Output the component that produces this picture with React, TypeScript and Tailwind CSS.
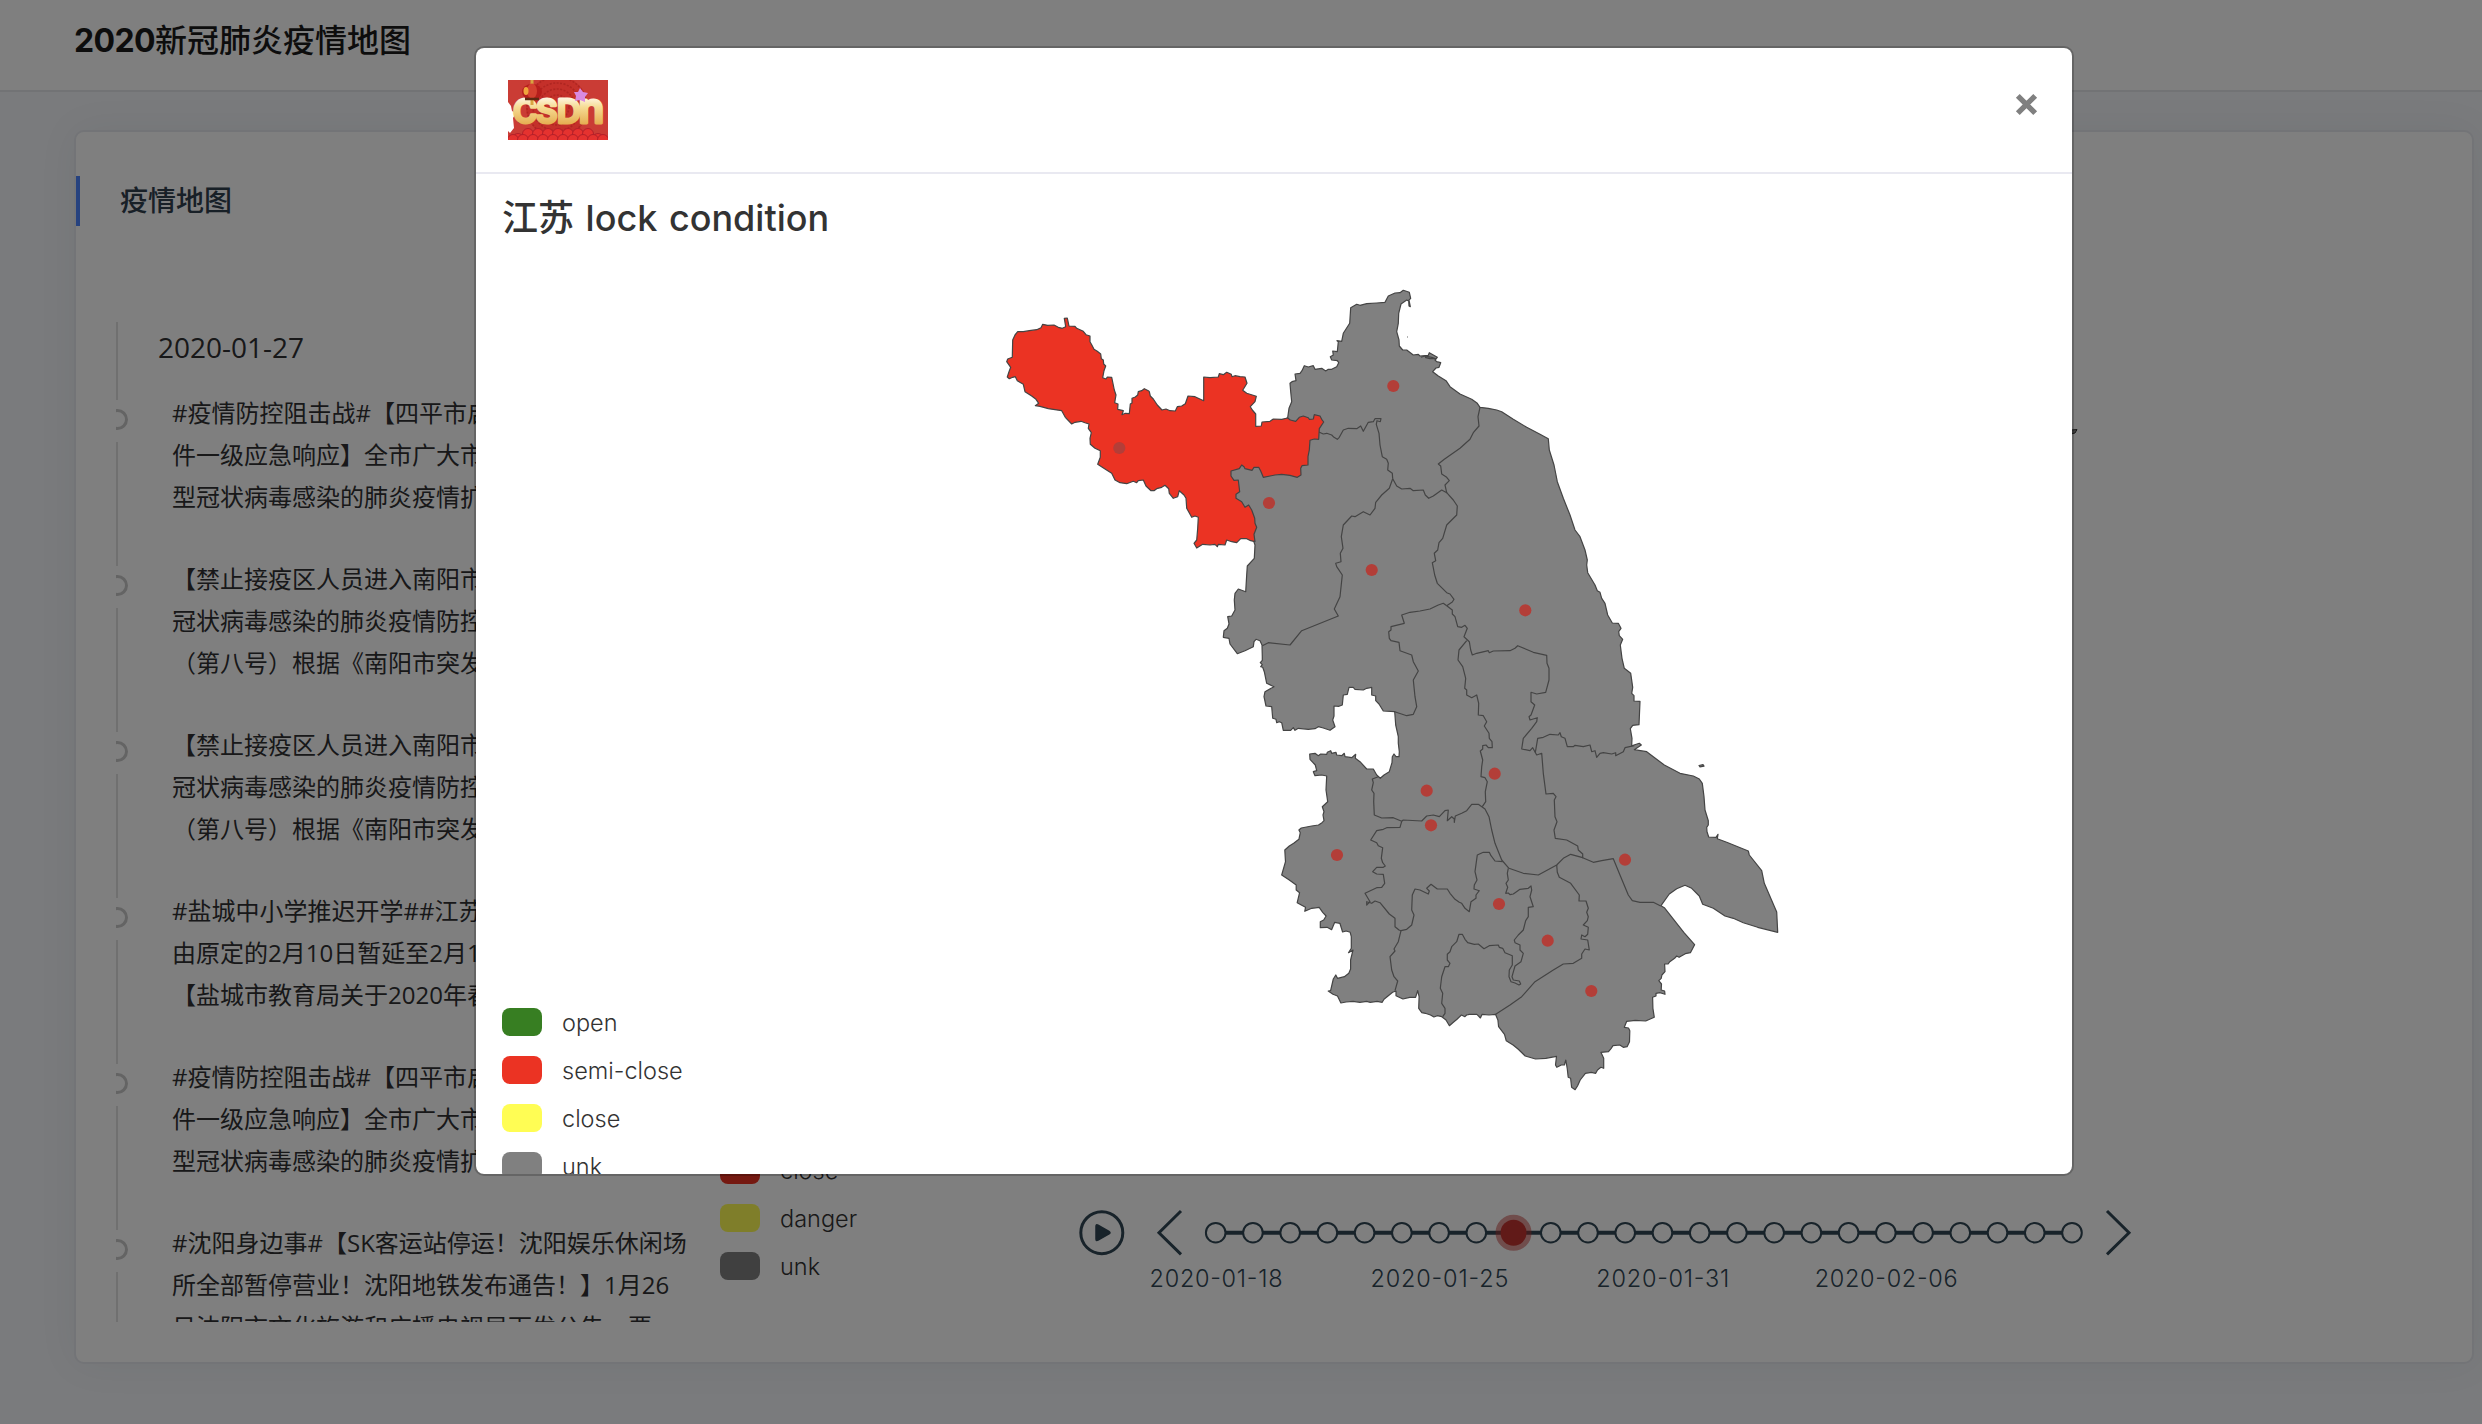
import React from "react";

type Origin = { x: number; y: number; sx: number; sy: number };

const NORTH_WEST: Origin = { x: 980, y: 280, sx: 3, sy: 3 };
const NORTH: Origin = { x: 1200, y: 270, sx: 3, sy: 3 };
const MIDDLE: Origin = { x: 1200, y: 600, sx: 3, sy: 3 };
const EAST: Origin = { x: 1480, y: 580, sx: 3, sy: 3 };
const SOUTH: Origin = { x: 1260, y: 800, sx: 2.904, sy: 3 };

/** Converts sheet-local points to map coordinates. */
function sheet(o: Origin, points: string): string {
  return points
    .trim()
    .split(/\s+/)
    .map((p) => {
      const [x, y] = p.split(",").map(Number);
      return `${(o.x + x / o.sx).toFixed(1)},${(o.y + y / o.sy).toFixed(1)}`;
    })
    .join(" ");
}

const xuzhou = sheet(
  NORTH_WEST,
  `113,155 130,155 148,152 170,149 183,143 188,133 203,136 222,135 235,142 247,145 257,140 253,115 262,114 267,138 285,139 290,145 310,154 318,164 330,168 330,185 335,194 342,208 352,214 362,222 364,236 370,240 371,252 377,258 372,272 368,293 378,297 382,291 395,292 400,315 403,330 408,345 404,368 414,372 413,388 430,392 426,404 436,400 448,401 451,372 456,369 456,355 466,351 473,345 475,335 485,332 493,326 505,332 508,335 511,348 520,357 532,375 546,390 558,387 570,392 586,393 592,380 605,378 616,371 624,348 645,350 658,356 671,362 671,291 690,293 715,291 718,281 730,284 740,277 754,283 756,290 765,287 780,290 795,291 801,310 788,331 800,340 829,349 825,365 811,380 817,390 827,402 827,439 844,438 846,426 870,424 880,417 905,418 923,414 931,420 947,424 958,412 970,408 985,413 988,418 1000,417 1003,404 1020,408 1025,418 1031,426 1018,446 1016,478 1003,477 990,481 988,510 984,530 984,555 966,557 962,565 963,585 952,592 930,586 905,583 885,585 870,588 850,592 842,573 836,562 822,562 816,571 795,566 792,560 785,555 778,566 753,573 753,588 762,601 775,600 779,635 768,643 768,655 785,665 795,682 806,675 815,690 824,715 825,730 830,742 822,763 825,785 812,782 800,776 782,776 770,788 755,785 740,780 735,795 715,793 712,800 705,793 690,795 668,793 650,804 642,790 650,780 653,745 655,712 645,708 635,712 620,685 618,655 612,645 598,632 593,650 580,655 568,640 566,626 555,616 545,622 530,626 522,632 513,632 498,618 490,600 475,602 470,608 460,604 440,611 420,608 405,600 395,580 375,567 353,553 361,532 361,512 345,505 331,493 330,475 334,458 325,445 327,432 315,428 303,424 285,427 275,432 256,412 245,392 225,389 205,386 180,379 166,377 176,370 168,358 155,348 135,335 130,313 112,302 106,290 98,292 88,296 82,291 87,275 92,262 80,245 83,237 97,232 98,180 105,165`,
);

const province = [
  sheet(NORTH, `263,443 267,415 275,395 272,365 270,340 276,335 288,332 285,312 300,310 306,302 313,287 325,291 340,287 345,298 365,295 377,303 385,298 395,298 410,290 416,278 412,272 395,270 391,260 400,255 398,243 412,245 415,215 411,212 425,214 430,190 449,160 452,113 470,103 480,106 500,101 530,99 555,97 565,78 585,69 600,68 610,61 628,67 632,85 627,90 631,110 627,108 626,93 620,90 603,102 596,130 595,160 590,185 597,210 598,228 608,240 620,240 640,255 655,253 660,258 685,256 688,248 712,262 705,270 710,275 722,278 717,292 708,294 698,305 715,318 738,332 750,350 780,372 815,388 832,400 840,412 865,415 890,420 905,425 940,448 980,472 1020,493 1045,506 1048,540 1062,585 1068,615 1072,635 1090,685 1110,735 1125,780 1140,800 1155,840 1162,870 1160,885 1163,908 1185,945 1192,962 1200,967 1205,985 1215,1000`),
  sheet(MIDDLE, `1215,10 1223,45 1237,69 1255,70 1263,85 1256,95 1258,107 1268,118 1261,135 1266,175 1273,205 1292,220 1298,262 1295,280 1302,287 1302,303 1320,304 1317,374 1298,376 1291,386 1296,415 1295,437 1318,430 1324,435 1303,449 1340,455`),
  sheet(EAST, `500,515 520,530 553,555 600,580 640,588 658,597 667,610 672,650 675,690 685,722 685,735 680,742 681,755 686,771 708,772 714,763 712,776 740,787 805,813 808,825 845,872 853,910 890,996 893,1057 833,1042 790,1028 760,1015 735,1008 700,985 668,973 658,948 635,925 615,916 590,926 568,942 543,977 553,983 612,1058`),
  sheet(SOUTH, `1262,434 1250,458 1235,461 1217,472 1210,468 1204,475 1190,485 1185,492 1175,492 1176,515 1167,525 1165,535 1158,542 1166,552 1165,570 1175,573 1176,583 1162,578 1150,580 1150,588 1140,592 1141,625 1145,652 1135,656 1120,663 1090,661 1065,664 1058,682 1070,684 1074,692 1073,725 1066,740 1055,742 1045,735 1025,737 1020,745 1012,755 990,757 998,775 998,805 990,802 980,810 975,820 962,817 945,820 930,840 922,858 915,869 905,862 902,835 895,832 892,805 888,780 884,795 875,795 862,802 858,795 861,769 830,775 800,777 770,768 750,748 735,735 715,722 710,703 693,680 691,660 684,643 665,645 645,643 640,654 630,643 608,643 600,645 595,650 585,645 572,658 560,668 550,677 540,660 528,650 515,647 505,651 495,645 480,640 470,638 461,625 462,590 458,572 452,592 435,592 415,597 395,587 395,573 385,577 360,598 355,607 340,604 320,607 310,604 290,607 270,604 250,606 235,609 225,588 212,583 198,573 205,572 213,537 220,525 225,535 245,530 258,520 263,507 263,480 270,450 257,458 265,445 265,410 262,397 250,393 240,396 232,370 217,367 208,389 195,382 175,383 175,365 185,360 192,348 182,337 172,322 150,325 130,334 132,322 120,315 108,308 115,278 105,270 105,255 85,240 63,225 74,185 72,150 85,138 98,130 113,118 117,98 113,90 120,84 150,78 170,75 180,68 186,62 183,45`),
  sheet(MIDDLE, `372,635 367,620 383,605 378,570 380,528 365,525 345,527 340,515 350,512 346,495 330,478 329,462 345,460 355,467 362,462 380,463 382,457 392,452 395,460 408,457 410,465 425,467 433,460 435,470 455,473 467,463 466,475 480,485 500,507 520,507 530,525 541,535 552,525 568,515 576,488 577,470 582,462 588,470 597,470 598,455 595,430 595,410 587,375 584,335 550,333 537,312 527,302 527,288 515,285 515,262 500,265 490,270 465,268 460,262 447,262 442,283 430,285 427,315 417,319 402,318 402,348 398,360 405,380 390,391 370,384 355,380 345,386 325,388 295,385 285,391 280,383 272,391 250,391 245,368 238,365 230,368 228,358 218,355 215,320 198,318 192,290 195,275 222,260 200,250 193,215 188,202 182,200 187,194 181,188 187,181 187,170 186,135 180,122 168,118 162,125 160,140 135,152 112,161 90,132 87,115 70,112 72,92 82,85 87,72 83,50 95,48 105,30 103,0`),
  sheet(NORTH, `105,970 115,957 137,965 140,915 142,888 163,865 165,825 150,780 60,600 150,500`),
].join(" ");

const borders = [
  sheet(NORTH, `355,485 370,492 380,490 395,495 402,502 412,508 418,502 430,480 445,475 470,476 482,468 490,484 505,457 520,455 525,446 543,446 541,455 531,452 529,463 537,490 540,525 547,560 560,568 565,580 563,600 577,610 578,626`),
  sheet(NORTH, `578,626 590,648 605,657 630,655 640,662 670,660 676,675 686,685 700,678 725,660 740,668 735,645 748,632 740,622 725,612 722,588 715,582 733,568 780,535 810,508 820,488 837,468 834,440 840,412`),
  sheet(NORTH, `578,626 568,655 545,675 527,697 525,715 510,735 490,725 465,740 455,738 430,765 424,800 429,835 421,850 423,875 407,880 410,890 427,915 420,980 403,1017 415,1038 305,1082 270,1125 205,1118 187,1127`),
  sheet(NORTH, `740,668 760,690 772,708 770,735 740,765 728,805 717,818 713,840 703,850 707,872 697,878 704,915 712,940 740,968 750,972 762,988 757,996 740,1007`),
  sheet(MIDDLE, `740,17 730,10 715,15 690,27 660,33 630,37 605,45 613,70 573,80 573,90 566,95 568,115 573,122 597,127 600,152 635,165 640,185 655,213 640,240 645,290 650,320 640,343 620,347 584,335`),
  sheet(MIDDLE, `740,17 757,30 757,42 765,50 773,80 785,82 795,76 802,85 792,110 808,125 812,150 817,165 830,160 865,152 868,158 880,153 930,152 945,145 953,137 1000,157 1040,166 1041,190 1047,205 1047,240 1037,277 1010,282 993,277 993,305 1004,315 993,345 987,350 990,360 1012,353 1010,365 995,385 970,415 965,447 990,452 998,443 1010,465 1025,460 1030,520 1038,582 1060,580 1068,590 1063,600 1065,650 1071,665 1062,690 1066,715 1100,720 1133,738 1135,750 1148,762 1148,775`),
  sheet(MIDDLE, `1006,458 1013,415 1030,412 1050,403 1075,405 1080,398 1084,410 1095,415 1102,440 1120,440 1125,436 1150,440 1170,435 1175,455 1185,452 1190,472 1200,460 1210,458 1235,462 1247,458 1247,467 1270,455 1275,443 1303,437`),
  sheet(MIDDLE, `800,122 777,150 774,180 788,200 797,235 794,265 800,270 800,285 815,293 830,285 836,310 835,345 850,347 860,365 853,378 867,400 868,415 876,425 877,443 865,443 858,435 848,437 848,447 841,453 848,480 845,500 843,530 855,533 862,545 856,575 857,605 847,620`),
  sheet(MIDDLE, `535,530 517,537 520,548 515,570 522,580 521,605 523,645 545,654 580,653 605,664 610,660 665,663 680,648 700,645 718,650 735,632 745,630 742,662 755,650 763,657 763,667 766,648 785,640 800,632 815,613 835,613 855,627 867,650 875,690 885,730 905,780 927,805 970,820 1015,825 1070,795 1090,775 1112,763 1148,773 1180,787 1205,782 1240,776 1262,830 1285,885 1297,902 1320,907 1360,907 1382,918`),
  sheet(MIDDLE, `605,664 600,682 560,683 550,688 530,692 512,720 530,728 535,737 548,743 544,775 548,788 556,798 550,802 530,802 518,815 530,822 550,823 554,850 545,862 530,863 495,880 510,905 500,915 500,905 515,910 525,903 540,908 568,942 585,955 585,980 597,990 603,992`),
  sheet(MIDDLE, `603,992 620,988 635,975 642,945 635,930 637,885 645,867 660,870 685,882 688,873 680,865 693,853 712,867 742,867 750,880 765,898 778,907 785,910 795,925 808,935 813,905 828,895 828,885 838,872 822,867 823,855 831,840 825,815 832,765 850,757 868,757 873,767 885,783 908,785`),
  sheet(MIDDLE, `603,992 595,1025 582,1047 585,1053 570,1070 575,1110 582,1130 593,1143 585,1172`),
  sheet(MIDDLE, `925,805 922,820 925,840 918,850 923,862 917,880 925,879 930,884 940,882 960,868 985,865 993,858 995,870 990,890 1000,920 985,922 985,950 977,962 970,990 955,1005 943,1020 945,1028 960,1035 960,1050 970,1060 963,1085 945,1098 936,1130 940,1140 958,1143 962,1152 957,1155 945,1149 933,1145 927,1130 928,1110 937,1095 937,1067 915,1058 908,1045 898,1042 895,1035 868,1037 852,1046 835,1032 823,1033 803,1028 795,1018 787,1003 777,1003 770,1025 755,1040 750,1055 742,1063 742,1080 750,1090 745,1100 735,1100 725,1130 721,1165 728,1180 725,1210 735,1225 735,1240 728,1250`),
  sheet(MIDDLE, `1070,795 1072,817 1078,832 1112,850 1138,885 1137,903 1158,903 1165,925 1160,937 1165,950 1162,962 1150,975 1165,982 1163,1003 1155,1010 1145,1005 1143,1017 1163,1020 1168,1050 1155,1047 1145,1062 1145,1075 1120,1090 1090,1092 1060,1110 1005,1145 965,1190 930,1215 887,1243`),
  sheet(NORTH, `663,262 675,258 695,262 708,266 690,266 675,262`),
];

const cities = [
  [1119.3, 448], [1269, 503], [1371.7, 570], [1393.3, 386], [1525.3, 610.3],
  [1426.7, 790.7], [1431, 825.3], [1337, 855], [1494.7, 773.7], [1625, 859.7],
  [1499, 904], [1547.7, 940.7], [1591.3, 991],
];

function ProvinceMap() {
  return (
    <svg className="absolute inset-0 h-full w-full" viewBox="476 174 1596 1000">
      <g stroke="#444444" strokeWidth="1.200" strokeLinejoin="round">
        <polygon points={province} fill="#808080" />
        {borders.map((b, i) => (
          <polyline key={i} points={b} fill="none" />
        ))}
        <polygon points={xuzhou} fill="#eb3323" />
        <path d="M1699 765.500l4-.8 1 1.500-4 .6z" fill="#808080" />
        <path d="M1407 337h.8" fill="none" />
      </g>
      {cities.map(([cx, cy]) => (
        <circle key={cx} cx={cx} cy={cy} r="6.100" fill="#b33e38" />
      ))}
    </svg>
  );
}

function Logo() {
  return (
    <svg className="h-[60px] w-[100px]" viewBox="0 0 100 60">
      <defs>
        <linearGradient id="gold" gradientUnits="userSpaceOnUse" x1="0" y1="15" x2="0" y2="45">
          <stop offset="0.05" stopColor="#fff8ea" />
          <stop offset="0.4" stopColor="#f6dc95" />
          <stop offset="0.95" stopColor="#e6b054" />
        </linearGradient>
        <clipPath id="logo-clip">
          <rect width="100" height="60" />
        </clipPath>
      </defs>
      <g clipPath="url(#logo-clip)">
        <rect width="100" height="60" fill="#ca3c35" />
        <circle cx="49" cy="27" r="31" fill="#c4302a" />
        <g fill="none" stroke="#a9231f" strokeWidth="1.600" strokeDasharray="2 1.500" opacity="0.75">
          <circle cx="49" cy="27" r="30" />
          <circle cx="49" cy="27" r="24" />
          <circle cx="49" cy="27" r="18" />
          <circle cx="49" cy="27" r="12" />
        </g>
        <g fill="#e5322f" stroke="#b3202a" strokeWidth="1">
          {[10, 20, 30, 40, 50, 60, 70, 80, 90].map((x) => (
            <circle key={x} cx={x} cy={x > 15 && x < 85 ? 54 : 59} r="5.500" />
          ))}
          {[5, 15, 25, 35, 45, 55, 65, 75, 85, 95].map((x) => (
            <circle key={x} cx={x} cy="60" r="5.500" />
          ))}
        </g>
        <path d="M0 22l3 4 1 5 4 2-3 5 1 10-4 5-2-2z" fill="#ffffff" />
        <path d="M8 35q5 1 3 8" fill="none" stroke="#8d2a4a" strokeWidth="1.500" />
        <text
          y="42.500"
          fill="url(#gold)"
          stroke="url(#gold)"
          strokeWidth="3"
          strokeLinejoin="round"
          className="[font-family:Inter,sans-serif] text-[33px] font-semibold"
        >
          <tspan x="5">C</tspan>
          <tspan x="28">S</tspan>
          <tspan x="49">D</tspan>
          <tspan x="70.500" className="text-[42px]">n</tspan>
        </text>
        <path d="M72 8l3 4 5 1-3 4 0 5-5-2-5 1 1-5-2-4 4 0z" fill="#d98ae0" />
        <path d="M24 0v4M24 19v6" stroke="#d9a441" strokeWidth="3" />
        <ellipse cx="24" cy="12" rx="10" ry="8" fill="#b51f1c" />
        <ellipse cx="24" cy="11" rx="5" ry="7.500" fill="#d3402f" />
        <ellipse cx="18" cy="11" rx="2.500" ry="4" fill="#f0a53c" />
        <path d="M17 19h14" stroke="#5f2a12" strokeWidth="2.500" />
      </g>
    </svg>
  );
}

function LegendRow({ swatch, label }: { swatch: string; label: string }) {
  return (
    <li className="flex h-12 items-center gap-5">
      <span className={`h-7 w-10 rounded-lg ${swatch}`} />
      <span className="pt-[2px] [font-family:Inter,'Noto_Sans_CJK_SC',sans-serif] text-[23.500px] leading-none font-light text-[#333]">
        {label}
      </span>
    </li>
  );
}

const news: string[][] = [
  ["#疫情防控阻击战#【四平市启动突发公共卫", "件一级应急响应】全市广大市民朋友", "型冠状病毒感染的肺炎疫情扩散"],
  ["【禁止接疫区人员进入南阳市】", "冠状病毒感染的肺炎疫情防控指挥部", "（第八号）根据《南阳市突发公共卫生"],
  ["【禁止接疫区人员进入南阳市】", "冠状病毒感染的肺炎疫情防控指挥部", "（第八号）根据《南阳市突发公共卫生"],
  ["#盐城中小学推迟开学##江苏盐城", "由原定的2月10日暂延至2月17日", "【盐城市教育局关于2020年春季开学"],
  ["#疫情防控阻击战#【四平市启动突发公共卫", "件一级应急响应】全市广大市民朋友", "型冠状病毒感染的肺炎疫情扩散"],
  ["#沈阳身边事#【SK客运站停运！沈阳娱乐休闲场", "所全部暂停营业！沈阳地铁发布通告！】1月26", "日沈阳市文化旅游和广播电视局下发公告，要"],
];

function NewsFeed() {
  return (
    <div className="ml-10 h-[1000px] w-[600px] shrink-0 overflow-hidden">
      <div className="flex h-[78px]">
        <span className="w-[2px] bg-[#e1e1e1]" />
        <span className="ml-10 mt-[5px] text-[28px] leading-[40px] text-[#303133]">2020-01-27</span>
      </div>
      {news.map((lines, i) => (
        <div key={i} className="flex h-[166px]">
          <div className="flex w-3 shrink-0 flex-col overflow-hidden">
            <span className="-ml-[9px] mt-[9px] mb-3 size-[21px] shrink-0 rounded-full border-[3px] border-[#c9c9c9]" />
            <span className="h-[124px] w-[2px] shrink-0 bg-[#e1e1e1]" />
          </div>
          <p className="-mt-2 ml-11 text-2xl leading-[42px] whitespace-nowrap text-[#303133] [text-spacing-trim:space-all]">
            {lines.map((line, j) => (
              <span key={j} className="block">
                {line}
              </span>
            ))}
          </p>
        </div>
      ))}
    </div>
  );
}

const NODE_STEP = 37.23;
const labels = [
  { at: 0, text: "2020-01-18", width: 133 },
  { at: 6, text: "2020-01-25", width: 138 },
  { at: 12, text: "2020-01-31", width: 133 },
  { at: 18, text: "2020-02-06", width: 143 },
];

function DateSlider() {
  return (
    <svg className="mb-[22px] h-[100px] w-[1070px]" viewBox="1076 1200 1070 100" fill="none" stroke="#304654">
      <circle cx="1101.800" cy="1232.700" r="21" strokeWidth="3" />
      <path d="M1096 1226.500q0-2.500 2-1.300l11 6.300q2 1.200 0 2.400l-11 6.300q-2 1.200-2-1.300z" fill="#304654" strokeWidth="1.500" />
      <path d="M1181 1211l-22 21.700 22 21.700M2107 1211l22 21.700-22 21.700" strokeWidth="3" />
      <path d={`M1215.700 1232.700H${1215.7 + 23 * NODE_STEP}`} strokeWidth="4" />
      {Array.from({ length: 24 }, (_, i) => (
        <circle key={i} cx={1215.7 + i * NODE_STEP} cy="1232.700" r="9.800" fill="#ffffff" strokeWidth="2" />
      ))}
      <circle cx={1215.7 + 8 * NODE_STEP} cy="1232.700" r="13" fill="#c23531" stroke="#c23531" strokeOpacity="0.5" strokeWidth="10" />
      {labels.map((l) => (
        <text
          key={l.text}
          x={1216 + l.at * NODE_STEP}
          y="1287"
          textAnchor="middle"
          textLength={l.width}
          fill="#304654"
          stroke="none"
          className="[font-family:Inter,sans-serif] text-[23.500px] font-light"
        >
          {l.text}
        </text>
      ))}
    </svg>
  );
}

function LockDialog() {
  return (
    <div className="absolute top-[46px] left-[474px] flex h-[1130px] w-[1600px] flex-col overflow-hidden rounded-[10px] border-2 border-black/20 bg-white bg-clip-padding">
      <div className="flex h-[126px] shrink-0 items-start justify-between border-b-2 border-[#e9e9f1] pt-8 pr-[34px] pl-8">
        <Logo />
        <svg className="mt-[13px] size-[23px]" viewBox="0 0 23 23" stroke="#808080" strokeWidth="5.400">
          <path d="M2.800 2.800l17.400 17.400M20.200 2.800L2.800 20.200" />
        </svg>
      </div>
      <div className="relative flex-1 overflow-hidden pl-[26px]">
        <ProvinceMap />
        <h2 className="relative mt-[18px] [font-family:Inter,'Noto_Sans_CJK_SC',sans-serif] text-[36px] leading-[52px] font-medium [word-spacing:2px] text-[#333]">
          江苏 lock condition
        </h2>
        <ul className="relative mt-[754px]">
          <LegendRow swatch="bg-[#377e22]" label="open" />
          <LegendRow swatch="bg-[#eb3323]" label="semi-close" />
          <LegendRow swatch="bg-[#fffd54]" label="close" />
          <LegendRow swatch="bg-[#808080]" label="unk" />
        </ul>
      </div>
    </div>
  );
}

export default function App() {
  return (
    <div className="relative h-[1424px] w-full overflow-hidden bg-[#f4f6fa] [font-family:'Open_Sans','Noto_Sans_CJK_SC',sans-serif]">
      <header className="h-[92px] border-b-2 border-[#e5e6ea] bg-white pl-[74px]">
        <h1 className="pt-[17px] [font-family:Inter,'Noto_Sans_CJK_SC',sans-serif] text-[32px] leading-[48px] font-bold text-[#1b1b1b]">
          <span className="tracking-[-0.600px]">2020</span>
          <span className="font-medium">新冠肺炎疫情地图</span>
        </h1>
      </header>
      <main className="pt-[38px] pl-[74px]">
        <section className="flex h-[1234px] w-[2400px] flex-col rounded-[10px] border-2 border-[#e6e8ee] bg-white shadow-[0_0_40px_rgba(40,44,60,0.06)]">
          <h2 className="mt-11 flex h-[50px] items-center border-l-4 border-[#4c84ff] pb-[2px] pl-10 text-[28px] font-medium text-[#31404e]">
            疫情地图
          </h2>
          <div className="mt-24 flex h-[1000px]">
            <NewsFeed />
            <div className="flex flex-1 items-end">
              <ul className="mb-8 ml-1 w-[356px]">
                <LegendRow swatch="bg-[#eb3323]" label="close" />
                <LegendRow swatch="bg-[#fffd54]" label="danger" />
                <LegendRow swatch="bg-[#808080]" label="unk" />
              </ul>
              <DateSlider />
            </div>
          </div>
        </section>
      </main>
      <svg className="absolute top-[428px] left-[2070px] h-[7px] w-2" viewBox="0 0 8 7" fill="#808080" stroke="#333" strokeWidth="1">
        <path d="M1 2l6-.5-2 3.500-4 1" />
      </svg>
      <div className="absolute inset-0 bg-black/50" />
      <LockDialog />
    </div>
  );
}
